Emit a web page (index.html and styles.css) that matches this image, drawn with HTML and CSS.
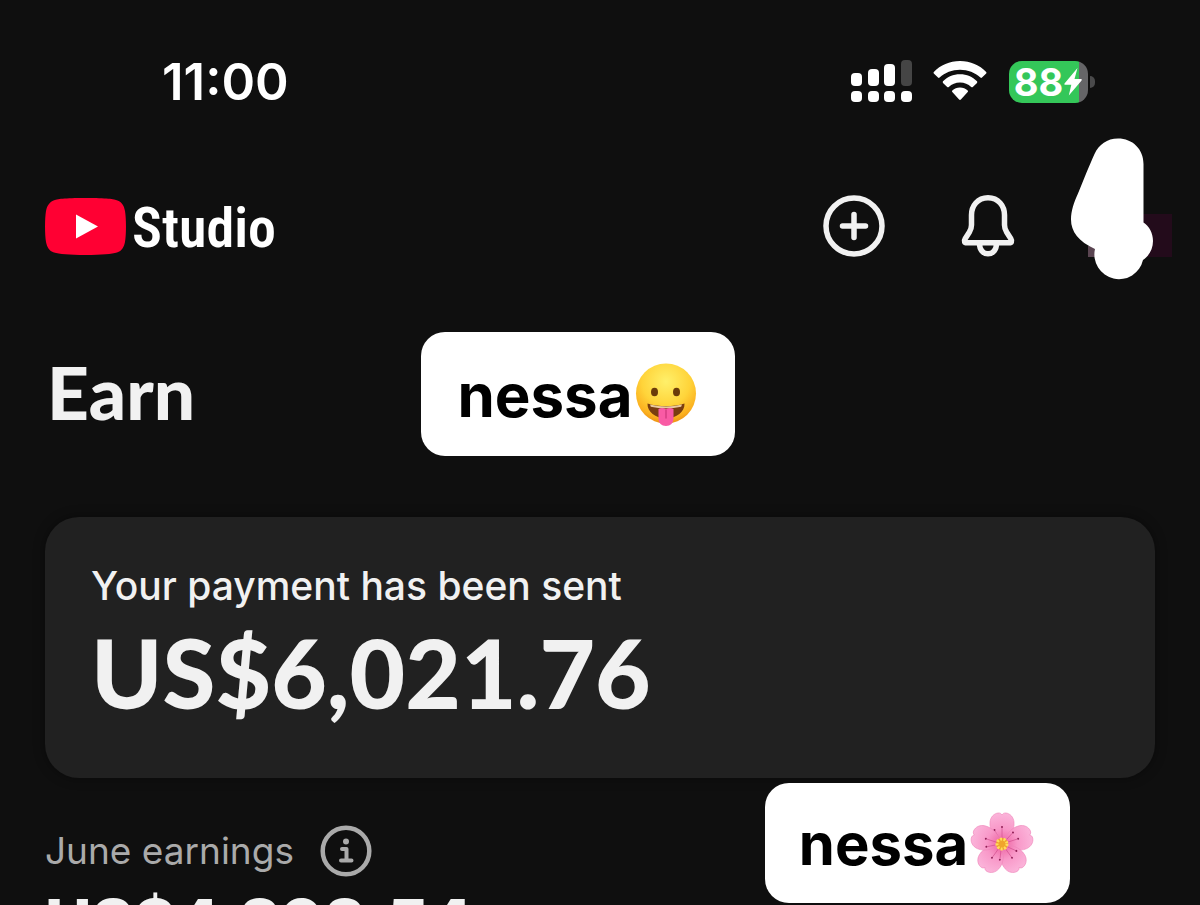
FILE: index.html
```html
<!DOCTYPE html>
<html lang="en">
<head>
	<meta charset="utf-8">
	<meta name="viewport" content="width=device-width, initial-scale=1">
	<title>Studio - Earn</title>
	<link rel="stylesheet" href="styles.css">
</head>

<body>
<div class="app">
	<div class="status">
		<span class="time">11:00</span>
		<div class="status-icons">
			<svg class="signal" viewBox="0 0 62 44" width="62" height="44">
				<g fill="#fff">
					<rect x="0" y="13" width="11" height="13" rx="4"/>
					<rect x="17" y="9" width="11" height="17" rx="4"/>
					<rect x="33" y="4" width="11" height="22" rx="4"/>
					<rect x="0" y="31" width="11" height="11" rx="4"/>
					<rect x="17" y="31" width="11" height="11" rx="4"/>
					<rect x="33" y="31" width="11" height="11" rx="4"/>
					<rect x="50" y="31" width="11" height="11" rx="4"/>
				</g>
				<rect x="50" y="0" width="11" height="26" rx="4" fill="#454545"/>
			</svg>
			<svg class="wifi" viewBox="0 0 54 44" width="54" height="44">
				<g fill="#fff">
					<path d="M27 1C16.500 1 7.500 5 .8 12q-.6.800 0 1.600L5 17.600q.8.600 1.600 0C12 12.500 19 9.700 27 9.700s15 2.800 20.400 7.900q.8.600 1.600 0l4.200-4q.6-.800 0-1.600C46.500 5 37.500 1 27 1z"/>
					<path d="M27 14.300c-6.800 0-12.500 2.500-17 7q-.6.800 0 1.600l4.200 4q.8.600 1.600 0c3-2.800 6.700-4.400 11.200-4.400s8.200 1.600 11.200 4.400q.8.600 1.600 0l4.200-4q.6-.800 0-1.600c-4.500-4.500-10.200-7-17-7z"/>
					<path d="M27 27.500c-3 0-5.600 1-7.700 2.900q-.8.800 0 1.600l6.800 7.500q.9.900 1.800 0l6.800-7.500q.8-.800 0-1.600C32.600 28.500 30 27.500 27 27.500z"/>
				</g>
			</svg>
			<div class="battery">
				<span>88</span>
				<svg viewBox="0 0 20 30" width="20" height="30"><path d="M14.500 1 1.500 16.500q-.8 1.300.8 1.300h6L5.800 28.500 18.600 13.400q.9-1.400-.9-1.400h-6.200z" fill="#fff"/></svg>
			</div>
		</div>
	</div>

	<header class="header">
		<a class="logo" href="#">
			<svg viewBox="0 0 81 57" width="81" height="57">
				<path d="M40.500 0C62 0 69 1 72.500 2.500 77.500 4.500 79 8 80 13c1.300 8 1.300 23 0 31-1 5-3 9-8 10.500C67 56 57 57 40.500 57S14 56 9 54.500C4 53 2 49 1 44c-1.300-8-1.300-23 0-31C2 8 4 4.500 8.500 2.500 12 1 19 0 40.500 0z" fill="#ff0033"/>
				<path d="M31 16.500v24l22-12z" fill="#fff"/>
			</svg>
			<span>Studio</span>
		</a>
		<div class="actions">
			<button type="button" aria-label="Create">
				<svg viewBox="0 0 62 62" width="62" height="62" fill="none" stroke="#f1f1f1" stroke-width="5.500" stroke-linecap="round">
					<circle cx="31" cy="31" r="28"/>
					<path d="M31 19.500v23M19.500 31h23"/>
				</svg>
			</button>
			<button type="button" aria-label="Notifications">
				<svg viewBox="0 0 62 62" width="62" height="62" fill="none" stroke="#f1f1f1" stroke-width="5.500" stroke-linejoin="round">
					<path d="M31 2.800C20.500 2.800 14.500 11 14.500 20v10c0 3-.8 5-2.200 7.300L8.300 43.500C6.500 46.500 7.500 47.800 10 47.800H52c2.500 0 3.500-1.300 1.700-4.300l-4-6.200C48.300 35 47.500 33 47.500 30V20C47.500 11 41.500 2.800 31 2.800z"/>
					<path d="M22.500 48.500c0 6 3.500 10.300 8.500 10.300s8.500-4.300 8.500-10.300"/>
				</svg>
			</button>
			<button type="button" aria-label="Account">
				<svg viewBox="1065 136 110 180" width="110" height="180">
					<path d="M1130 214h42v43h-42z" fill="#230b1b"/>
					<path d="M1088 246h12v11h-12z" fill="#5a4551"/>
					<path d="M1118 138.500c-11 0-19 6-23.500 15.500-5 11-11 26-16.500 39.500-4 9-7 17-7 26 0 12 7.500 22 24 29.500a24.300 24.300 0 1 0 48 11C1149 256 1153 249 1153 241c0-8-4-15-9.500-18.500V164c0-15-11-25.500-25.500-25.500z" fill="#fff"/>
				</svg>
			</button>
		</div>
	</header>

	<main>
		<h1>Earn</h1>
		<section class="card">
			<p class="card-label">Your payment has been sent</p>
			<p class="card-amount">US$6,021.76</p>
		</section>
		<section class="month">
			<div class="month-label">
				<h2>June earnings</h2>
				<button type="button" aria-label="About June earnings">
					<svg viewBox="0 0 52 52" width="52" height="52" fill="none" stroke="#aaa" stroke-width="4.500" stroke-linecap="round" stroke-linejoin="round">
						<circle cx="26" cy="26" r="23.300"/>
						<path d="M22 24h4.500v11.500M21 35.500h10.500" stroke-width="4"/>
						<circle cx="26" cy="16.500" r="3" fill="#aaa" stroke="none"/>
					</svg>
				</button>
			</div>
			<p class="month-amount">US$4,898.54</p>
		</section>
	</main>

	<!-- name stickers lie over the page -->
	<div class="sticker sticker-top">
		<span>nessa</span>
		<svg viewBox="0 0 62 64" width="62" height="64">
			<defs>
				<radialGradient id="face" cx=".5" cy=".3" r=".72">
					<stop offset="0" stop-color="#fff06a"/>
					<stop offset=".55" stop-color="#ffd43a"/>
					<stop offset=".85" stop-color="#fbb01f"/>
					<stop offset="1" stop-color="#e98a12"/>
				</radialGradient>
			</defs>
			<circle cx="31" cy="30.500" r="30" fill="url(#face)"/>
			<ellipse cx="19.500" cy="29" rx="3.500" ry="4.300" fill="#6b3c0a"/>
			<ellipse cx="41.500" cy="29" rx="3.500" ry="4.300" fill="#6b3c0a"/>
			<path d="M12.500 40.500c11 3.500 26 3.500 37 0 .5 8-8 15-18.500 15s-19-7-18.500-15z" fill="#7a3d10"/>
			<path d="M15 41.500c10 2.500 22 2.500 32 0l-.8 2.300c-10 2-20.400 2-30.400 0z" fill="#e9c9a0"/>
			<path d="M23.500 46q3.500-2 7.500 0 4-2 7.500 0v9c0 5-3 8-7.500 8s-7.500-3-7.500-8z" fill="#f95ba5"/>
			<path d="M31 47v8" stroke="#d43c83" stroke-width="1.500" stroke-linecap="round"/>
		</svg>
	</div>
	<div class="sticker sticker-bottom">
		<span>nessa</span>
		<svg viewBox="-32 -32 64 64" width="64" height="64">
			<defs>
				<radialGradient id="petals" gradientUnits="userSpaceOnUse" cx="0" cy="0" r="31">
					<stop offset="0" stop-color="#ec5c9d"/>
					<stop offset=".5" stop-color="#f898c8"/>
					<stop offset="1" stop-color="#fbb4da"/>
				</radialGradient>
				<g id="petal">
					<path d="M0 0C-6-5-13-13-12-22c.5-5 4-8.500 8-9 2-.2 3.200.5 4 2 .8-1.500 2-2.200 4-2 4 .5 7.500 4 8 9C13-13 6-5 0 0z" fill="url(#petals)" stroke="#ef86b9" stroke-width=".6"/>
					<path d="M0-5v-11M-3-6l-4-7" stroke="#cf4b8a" stroke-width=".6"/>
					<circle cx="0" cy="-17" r="1" fill="#8f1f55"/>
					<circle cx="-7.500" cy="-14" r="1" fill="#8f1f55"/>
				</g>
			</defs>
			<use href="#petal"/>
			<use href="#petal" transform="rotate(72)"/>
			<use href="#petal" transform="rotate(144)"/>
			<use href="#petal" transform="rotate(216)"/>
			<use href="#petal" transform="rotate(288)"/>
			<circle r="6" fill="#f0a52c"/>
			<circle r="5" fill="none" stroke="#ffdc5e" stroke-width="3" stroke-dasharray="2 1.500"/>
		</svg>
	</div>
</div>
</body>
</html>
```
FILE: styles.css
```css
* {
	box-sizing:border-box;
}
body {
	margin:0;
	background:#0f0f0f;
	color:#f1f1f1;
	font-family:Inter,"Liberation Sans",sans-serif;
}
h1,h2,p {
	margin:0;
}
button {
	padding:0;
	border:0;
	background:none;
	cursor:pointer;
}
svg {
	display:block;
	flex:none;
}
.app {
	position:relative;
	height:100vh;
	overflow:hidden;
}
.status {
	display:flex;
	justify-content:space-between;
	align-items:center;
	height:136px;
	padding:27px 112px 0 162px;
	color:#fff;
}
.time {
	font-size:51px;
	line-height:60px;
	font-weight:600;
}
.status-icons {
	display:flex;
	align-items:center;
	gap:20px;
}
.battery {
	position:relative;
	display:flex;
	align-items:center;
	justify-content:center;
	width:79px;
	height:42px;
	margin-left:2px;
	border-radius:13px;
	background:linear-gradient(to right,#34c759 70px,#656567 70px);
	font-size:38px;
	line-height:42px;
	font-weight:700;
}
.battery:after {
	content:"";
	position:absolute;
	left:81px;
	top:15px;
	width:5px;
	height:12px;
	border-radius:0 6px 6px 0;
	background:#4a4a4b;
}
.header {
	display:flex;
	justify-content:space-between;
	align-items:center;
	padding:0 25px 0 45px;
}
.logo {
	display:flex;
	align-items:center;
	gap:6px;
	color:#fff;
	text-decoration:none;
}
.logo span {
	padding-top:4px;
	font-family:"Roboto Condensed",Roboto,sans-serif;
	font-size:56px;
	line-height:60px;
	font-weight:600;
}
.actions {
	display:flex;
	align-items:center;
}
.actions button + button {
	margin-left:72px;
}
.actions button:last-child {
	margin-left:46px;
}
main {
	padding:36px 45px 0;
}
h1 {
	padding-left:2px;
	font-family:Lato,sans-serif;
	font-size:73px;
	line-height:80px;
	font-weight:900;
}
.card {
	margin-top:85px;
	padding:45px 46px;
	border-radius:34px;
	background:#212121;
	box-shadow:0 0 12px rgba(0,0,0,.4);
}
.card-label {
	font-size:39px;
	line-height:48px;
	font-weight:500;
}
.card-amount {
	font-family:Lato,sans-serif;
	font-size:96px;
	line-height:123px;
	font-weight:900;
}
.month {
	margin-top:47px;
}
.month-label {
	display:flex;
	align-items:center;
	gap:26px;
}
h2 {
	color:#aaa;
	font-size:37px;
	line-height:48px;
	font-weight:400;
}
.month-amount {
	margin-top:10px;
	font-size:64px;
	line-height:72px;
	font-weight:800;
}
.sticker {
	position:absolute;
	display:flex;
	align-items:center;
	justify-content:center;
	gap:2px;
	border-radius:24px;
	background:#fff;
	color:#000;
	font-size:60px;
	line-height:72px;
	font-weight:700;
}
.sticker-top {
	left:421px;
	top:332px;
	width:314px;
	height:124px;
	padding:2px 2px 0 0;
}
.sticker-bottom {
	left:765px;
	top:783px;
	width:305px;
	height:120px;
	padding:2px 2px 0 0;
	font-size:58px;
}
```
